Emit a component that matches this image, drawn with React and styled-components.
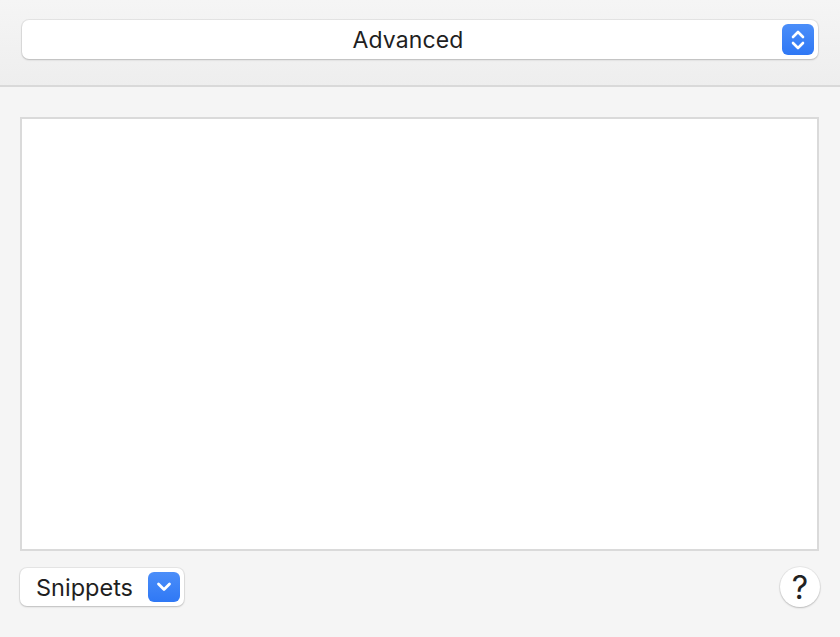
import styled, { createGlobalStyle } from "styled-components";

const Global = createGlobalStyle`
  html, body {
    margin: 0;
    padding: 0;
    background: #f5f5f5;
  }
  body {
    font-family: Inter, "Liberation Sans", sans-serif;
    color: #1f1f1f;
  }
`;

const Page = styled.div`
  width: 840px;
  height: 637px;
  display: flex;
  flex-direction: column;
  background: #f5f5f5;
  overflow: hidden;
`;

const Header = styled.div`
  height: 87px;
  box-sizing: border-box;
  padding: 20px 22px 0 22px;
  background: linear-gradient(#f5f5f5, #eeeeee);
  border-bottom: 2px solid #d9d9d9;
`;

const Popup = styled.div`
  position: relative;
  height: 39px;
  display: flex;
  align-items: center;
  justify-content: center;
  padding-right: 24px;
  background: #fff;
  border-radius: 7px;
  box-shadow: 0 0 0 1px rgba(0, 0, 0, 0.06), 0 1px 2px rgba(0, 0, 0, 0.18);
  font-size: 23px;
  letter-spacing: 0.1px;
`;

const Stepper = styled.div`
  position: absolute;
  right: 4px;
  top: 4px;
  width: 32px;
  height: 31px;
  border-radius: 6px;
  background: linear-gradient(#4b8ef9, #2f78f5);
  display: flex;
  align-items: center;
  justify-content: center;
`;

const Body = styled.div`
  flex: 1;
  display: flex;
  flex-direction: column;
  padding: 30px 21px 0 20px;
`;

const Editor = styled.div`
  height: 434px;
  box-sizing: border-box;
  background: #fff;
  border: 2px solid #dadada;
`;

const Footer = styled.div`
  display: flex;
  align-items: center;
  justify-content: space-between;
  margin-top: 16px;
  margin-right: -1px;
`;

const SnippetButton = styled.div`
  height: 38px;
  width: 164px;
  box-sizing: border-box;
  display: flex;
  align-items: center;
  justify-content: space-between;
  padding: 0 4px 0 16px;
  background: #fff;
  border-radius: 7px;
  box-shadow: 0 0 0 1px rgba(0, 0, 0, 0.06), 0 1px 2px rgba(0, 0, 0, 0.18);
  font-size: 23.5px;
`;

const Chevron = styled.div`
  width: 32px;
  height: 30px;
  border-radius: 6px;
  background: linear-gradient(#4b8ef9, #2f78f5);
  display: flex;
  align-items: center;
  justify-content: center;
`;

const Help = styled.div`
  width: 40px;
  height: 40px;
  border-radius: 50%;
  background: #fff;
  box-shadow: 0 0 0 1px rgba(0, 0, 0, 0.05), 0 1px 2px rgba(0, 0, 0, 0.2);
  display: flex;
  align-items: center;
  justify-content: center;
  font-size: 32px;
  font-weight: 400;
  color: #222;
`;

function App() {
  return (
    <Page>
      <Global />
      <Header>
        <Popup>
          Advanced
          <Stepper>
            <svg width="18" height="26" viewBox="0 0 18 26" fill="none" stroke="#fff" strokeWidth="2.6" strokeLinecap="round" strokeLinejoin="round">
              <path d="M4 10 L9 5 L14 10" />
              <path d="M4 16 L9 21 L14 16" />
            </svg>
          </Stepper>
        </Popup>
      </Header>
      <Body>
        <Editor />
        <Footer>
          <SnippetButton>
            Snippets
            <Chevron>
              <svg width="18" height="14" viewBox="0 0 18 14" fill="none" stroke="#fff" strokeWidth="2.8" strokeLinecap="round" strokeLinejoin="round">
                <path d="M3.5 4 L9 9.5 L14.5 4" />
              </svg>
            </Chevron>
          </SnippetButton>
          <Help>?</Help>
        </Footer>
      </Body>
    </Page>
  );
}

export default App;
